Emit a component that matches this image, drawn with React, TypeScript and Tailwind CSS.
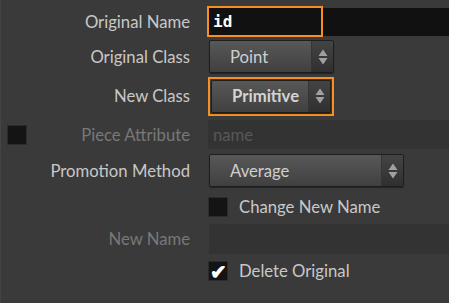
import React from 'react'

const font = { fontFamily: 'Lato, "Noto Sans", sans-serif' }

function Arrows() {
  return (
    <svg width="10" height="16" viewBox="0 0 10 16" className="block">
      <path d="M5 0.5 L9.5 7 L0.5 7 Z" fill="#a0a0a0" />
      <path d="M5 15.5 L9.5 9 L0.5 9 Z" fill="#a0a0a0" />
    </svg>
  )
}

function Dropdown({ value, width, bold }: { value: string; width: number; bold?: boolean }) {
  return (
    <div
      className="flex h-[33px] rounded-[2px] border border-[#1e1e1e] bg-gradient-to-b from-[#585858] to-[#404040] shadow-[0_1px_1px_rgba(0,0,0,0.4)]"
      style={{ width }}
    >
      <div className={`flex-1 flex items-center pl-[20px] pt-[2px] text-[16.7px] ${bold ? 'font-bold text-[#d4d4d4]' : 'text-[#cfcfcf]'}`}>
        {value}
      </div>
      <div className="w-[22px] flex items-center justify-center bg-gradient-to-b from-[#444] to-[#303030] border-l border-[#353535]">
        <Arrows />
      </div>
    </div>
  )
}

function Checkbox({ checked }: { checked?: boolean }) {
  return (
    <div className="w-[20px] h-[20px] bg-[#141414] border border-[#2c2c2c] flex items-center justify-center">
      {checked && <span className="text-white text-[20px] leading-none font-bold -mt-[1px]">✔</span>}
    </div>
  )
}

function Label({ children, dim }: { children: React.ReactNode; dim?: boolean }) {
  return <span className={`pt-[2px] text-[16.7px] ${dim ? 'text-[#787878]' : 'text-[#c8c8c8]'}`}>{children}</span>
}

export default function App() {
  return (
    <div className="w-[449px] h-[303px] bg-[#3a3a3a] overflow-hidden border-l border-[#444] pt-[4px]" style={font}>
      <div className="grid grid-cols-[189px_1fr]">
        {/* Original Name */}
        <div className="h-[35px] flex items-center justify-end"><Label>Original Name</Label></div>
        <div className="h-[35px] flex items-center pl-[17px]">
          <div className="w-[116px] h-[31px] border-2 border-[#f7901e] bg-[#111] flex items-center pl-[4px]">
            <span className="text-white font-bold text-[16px]" style={{ fontFamily: '"DejaVu Sans Mono", monospace' }}>id</span>
          </div>
          <div className="flex-1 h-[28px] bg-[#111]" />
        </div>

        {/* Original Class */}
        <div className="h-[35px] flex items-center justify-end"><Label>Original Class</Label></div>
        <div className="h-[35px] flex items-center pl-[19px]">
          <Dropdown value="Point" width={125} />
        </div>

        {/* New Class */}
        <div className="h-[44px] flex items-center justify-end"><Label>New Class</Label></div>
        <div className="h-[44px] flex items-center pl-[18px]">
          <div className="border-2 border-[#f7901e] p-[1px]">
            <Dropdown value="Primitive" width={120} bold />
          </div>
        </div>

        {/* Piece Attribute */}
        <div className="h-[33px] flex items-center justify-between pl-[6px]">
          <Checkbox />
          <Label dim>Piece Attribute</Label>
        </div>
        <div className="h-[33px] flex items-center pl-[18px]">
          <div className="flex-1 h-[29px] bg-[#333] flex items-center pl-[5px] pt-[2px] text-[16.7px] text-[#585858]">name</div>
        </div>

        {/* Promotion Method */}
        <div className="h-[39px] flex items-center justify-end"><Label>Promotion Method</Label></div>
        <div className="h-[39px] flex items-center pl-[19px]">
          <Dropdown value="Average" width={195} />
        </div>

        {/* Change New Name */}
        <div className="h-[34px]" />
        <div className="h-[34px] flex items-center pl-[18px] gap-[11px]">
          <Checkbox />
          <Label>Change New Name</Label>
        </div>

        {/* New Name */}
        <div className="h-[30px] flex items-center justify-end"><Label dim>New Name</Label></div>
        <div className="h-[30px] flex items-center pl-[19px]">
          <div className="flex-1 h-[30px] bg-[#333]" />
        </div>

        {/* Delete Original */}
        <div className="h-[34px]" />
        <div className="h-[34px] flex items-center pl-[18px] gap-[11px]">
          <Checkbox checked />
          <Label>Delete Original</Label>
        </div>
      </div>
    </div>
  )
}
